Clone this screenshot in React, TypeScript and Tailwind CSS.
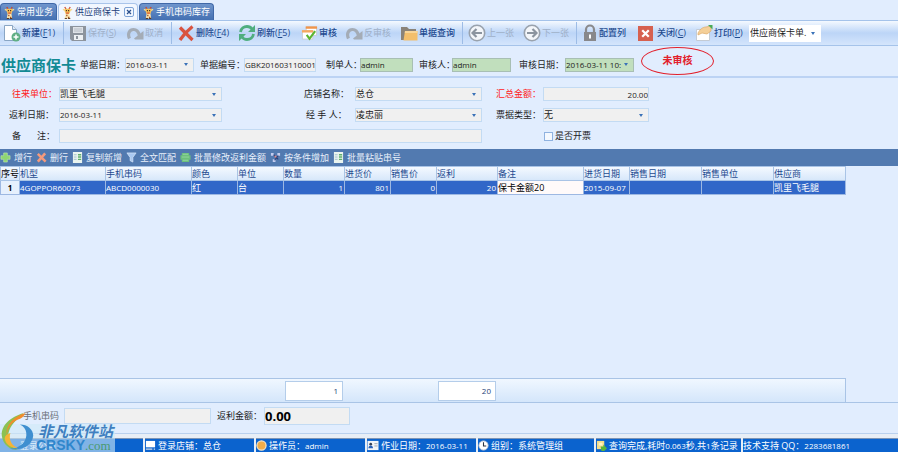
import { ReactNode } from "react";
import clsx from "clsx";

const Giraffe = () => (
  <svg viewBox="0 0 12 14" className="h-[13px] w-[11px] shrink-0">
    <path d="M3 1l1.500 2.500M9 1L7.500 3.500" stroke="#c9402b" strokeWidth="1.300" />
    <path d="M1 3.500l3 1.500M11 3.500L8 5" stroke="#f7d98c" strokeWidth="1.600" />
    <path d="M3 3h6v3l-1 2.500H4L3 6z" fill="#f6c25c" />
    <path d="M4 8h4l1 5.500H3z" fill="#fbe7b0" />
    <path d="M4.500 9.500h1.500v1.500H4.500zM6.500 11.500h1.500V13H6.500z" fill="#a8552a" />
    <path d="M4.500 6.800h3v1.700h-3z" fill="#e0683c" />
    <circle cx="4.800" cy="5" r="0.700" fill="#3b2412" />
    <circle cx="7.200" cy="5" r="0.700" fill="#3b2412" />
    <path d="M3 13.500h2.500M6.500 13.500H9" stroke="#4b2a12" />
  </svg>
);

const NewIcon = () => (
  <svg viewBox="0 0 18 18" className="h-[18px] w-[18px] shrink-0">
    <path d="M1.500 1.500h8l4 4v11h-12z" fill="#fff" stroke="#8aa6c4" />
    <path d="M9.500 1.500v4h4" fill="#dfe9f5" stroke="#8aa6c4" />
    <circle cx="13" cy="13" r="4.500" fill="#5fae84" />
    <path d="M13 10.500v5M10.500 13h5" stroke="#fff" strokeWidth="1.500" />
  </svg>
);

const SaveIcon = () => (
  <svg viewBox="0 0 18 18" className="h-[18px] w-[18px] shrink-0">
    <path d="M1 2h16v15H3l-2-2z" fill="#8d949d" />
    <path d="M4 3h10v6H4z" fill="#dfe3e8" />
    <path d="M5 5h8M5 7h8" stroke="#b6bcc4" />
    <path d="M5 11h9v5H5z" fill="#eef1f4" />
    <path d="M7 12h2v3H7z" fill="#8d949d" />
  </svg>
);

const UndoIcon = () => (
  <svg viewBox="0 0 18 18" className="h-[18px] w-[18px] shrink-0">
    <path d="M3.500 14.500C1 9 4 5.500 7.500 5.500c3 0 5 2 6 6" fill="none" stroke="#a4acb6" strokeWidth="3.200" />
    <path d="M8 14.500L17.500 7v8.500H9z" fill="#a4acb6" />
  </svg>
);

const DeleteIcon = () => (
  <svg viewBox="0 0 18 18" className="h-[18px] w-[18px] shrink-0">
    <path d="M3 3.500L15.500 16M15.500 2.500C11 6 7 10 3 16" fill="none" stroke="#d9533f" strokeWidth="3.200" />
  </svg>
);

const RefreshIcon = () => (
  <svg viewBox="0 0 18 18" className="h-[18px] w-[18px] shrink-0">
    <path d="M2.500 8C3 4.500 6 2.500 9 2.500c2.500 0 4 1 5 2.500M15.500 10c-.5 3.500-3.500 5.500-6.500 5.500-2.500 0-4-1-5-2.500" fill="none" stroke="#4fae7f" strokeWidth="2.800" />
    <path d="M17 1v7h-7zM1 17v-7h7z" fill="#4fae7f" />
  </svg>
);

const AuditIcon = () => (
  <svg viewBox="0 0 18 18" className="h-[18px] w-[17px] shrink-0">
    <path d="M5.500 2.500h11v9h-11z" fill="#fff" stroke="#c9cdd2" />
    <path d="M5 2h12v2.500H5z" fill="#f0954b" />
    <path d="M1.500 6.500h11v9h-11z" fill="#fff" stroke="#c9cdd2" />
    <path d="M1 6h12v2.500H1z" fill="#f6a85e" />
    <path d="M6 11l3 4 6-8" fill="none" stroke="#5cb531" strokeWidth="2.200" />
  </svg>
);

const FolderIcon = () => (
  <svg viewBox="0 0 18 18" className="h-[18px] w-[18px] shrink-0">
    <path d="M1 3h6l2 2h7v11H1z" fill="#8b8378" />
    <path d="M5 7h12.500v9.500H3.500z" fill="#f3bf6c" />
    <path d="M5 7h12.500v2H4.800z" fill="#f8d598" />
  </svg>
);

const ArrowIcon = ({ next }: { next?: boolean }) => (
  <svg viewBox="0 0 18 18" className={clsx("h-[18px] w-[18px] shrink-0", next && "rotate-180")}>
    <circle cx="9" cy="9" r="7.700" fill="#f3f6fa" stroke="#99a2ad" strokeWidth="1.600" />
    <path d="M14 9H5M8.500 5L4.500 9l4 4" fill="none" stroke="#8b949f" strokeWidth="2.200" />
  </svg>
);

const LockIcon = () => (
  <svg viewBox="0 0 16 18" className="h-[18px] w-4 shrink-0">
    <path d="M4 9V5.500a4 4 0 018 0V9" fill="none" stroke="#8a8a8c" strokeWidth="2.200" />
    <path d="M2 8h12v9H2z" fill="#88888b" />
    <path d="M7 10.500h2v4H7z" fill="#fff" />
  </svg>
);

const CloseIcon = () => (
  <svg viewBox="0 0 16 16" className="mr-[3px] h-[15px] w-[15px] shrink-0">
    <path d="M0 0h16v16H0z" fill="#d6604f" />
    <path d="M4.500 4.500l7 7M11.500 4.500l-7 7" stroke="#fff" strokeWidth="2.400" />
  </svg>
);

const PrintIcon = () => (
  <svg viewBox="0 0 18 18" className="h-[18px] w-[18px] shrink-0">
    <path d="M1.500 5.500h13v11h-13z" fill="#fff" stroke="#c4cbd4" />
    <path d="M3 9c2-4 5-6 8-6l5-1v5l-4 3-5-1-4 2z" fill="#f4cf98" stroke="#dca967" strokeWidth="0.700" />
    <path d="M13 1h4.500v4.500z" fill="#4aaa55" />
  </svg>
);

const PlusIcon = () => (
  <svg viewBox="0 0 12 12" className="h-[11px] w-[11px] shrink-0">
    <path d="M4 1h4v3h3v4H8v3H4V8H1V4h3z" fill="#8fd672" stroke="#c6efb4" strokeWidth="0.600" />
  </svg>
);

const CrossIcon = () => (
  <svg viewBox="0 0 12 12" className="h-[11px] w-[11px] shrink-0">
    <path d="M2 2l8.500 8.500M10 1.500L2 10.500" stroke="#f59a7c" strokeWidth="2.800" />
  </svg>
);

const SheetIcon = () => (
  <svg viewBox="0 0 12 12" className="h-[11px] w-[11px] shrink-0">
    <path d="M1 0h10v12H1z" fill="#eaf4ef" />
    <path d="M2 3h3M2 5.500h3M2 8h3" stroke="#9bbccd" />
    <path d="M6.500 3h3.500M6.500 5.500h3.500M6.500 8h3.500" stroke="#5fae6c" strokeWidth="1.500" />
  </svg>
);

const FunnelIcon = () => (
  <svg viewBox="0 0 12 12" className="h-[11px] w-[11px] shrink-0">
    <path d="M1 1h10L7.500 6v5l-3-1.500V6z" fill="#a9c8f0" stroke="#dfeafa" strokeWidth="0.700" />
  </svg>
);

const BatchIcon = () => (
  <svg viewBox="0 0 12 12" className="h-[11px] w-[11px] shrink-0">
    <path d="M2 1h8v2.500h1.500v5H10V11H2V8.500H.5v-5H2z" fill="#6cc07c" />
    <path d="M3 2.500h6M2 5.500h8M3 9h6" stroke="#9fdcaa" strokeWidth="0.800" />
  </svg>
);

const NodesIcon = () => (
  <svg viewBox="0 0 12 12" className="h-[11px] w-[11px] shrink-0">
    <path d="M1 1h3v3H1zM8 1h3v3H8zM3 8h3v3H3z" fill="#c3cdf0" />
    <path d="M4 3l5 5M9 4L5 9" stroke="#2c3f78" strokeWidth="1.200" />
    <path d="M5 4h2v2H5z" fill="#e58a8a" />
  </svg>
);

const MonitorIcon = () => (
  <svg viewBox="0 0 12 12" className="h-[11px] w-[11px] shrink-0">
    <path d="M1 1h10v7H1z" fill="#fff" />
    <path d="M1 10h7M9.500 10H11" stroke="#d4dce8" strokeWidth="1.500" />
  </svg>
);

const UserIcon = () => (
  <svg viewBox="0 0 12 12" className="h-[11px] w-[11px] shrink-0">
    <circle cx="6" cy="6" r="5" fill="#f0ad4b" stroke="#fbe6c3" strokeWidth="1.300" />
  </svg>
);

const CardIcon = () => (
  <svg viewBox="0 0 12 12" className="h-[11px] w-[12px] shrink-0">
    <path d="M0 1h12v10H0z" fill="#f3f5f8" />
    <circle cx="3.500" cy="4.500" r="1.500" fill="#333f55" />
    <path d="M1 9c0-4 5-4 5 0z" fill="#2a61b8" />
    <path d="M7.500 4H11M7.500 6.500H11" stroke="#9aa3b0" />
  </svg>
);

const ClockIcon = () => (
  <svg viewBox="0 0 12 12" className="h-[11px] w-[11px] shrink-0">
    <circle cx="6" cy="6" r="5" fill="#fff" stroke="#c9ced6" />
    <path d="M6 2.500V6.500h3" fill="none" stroke="#2b3340" strokeWidth="1.200" />
  </svg>
);

const DoneIcon = () => (
  <svg viewBox="0 0 12 12" className="h-[11px] w-[11px] shrink-0">
    <path d="M1 1h8v9H1z" fill="#f7df8a" />
    <path d="M3 3h4v3H3z" fill="#fff3c4" />
    <path d="M5 7h3V5l4 4-3 3H6z" fill="#5ab53c" />
  </svg>
);

type Tool = { icon: ReactNode; text: string; hotkey?: [string, string]; width: string; off?: boolean; line?: boolean };

const tools: Tool[] = [
  { icon: <NewIcon />, text: "新建", hotkey: ["F", "1"], width: "w-[60px]", line: true },
  { icon: <SaveIcon />, text: "保存", hotkey: ["S", ""], width: "w-[57px]", off: true },
  { icon: <UndoIcon />, text: "取消", width: "w-[45px]", off: true, line: true },
  { icon: <DeleteIcon />, text: "删除", hotkey: ["F", "4"], width: "w-[61px]" },
  { icon: <RefreshIcon />, text: "刷新", hotkey: ["F", "5"], width: "w-[63px]" },
  { icon: <AuditIcon />, text: "审核", width: "w-[44px]" },
  { icon: <UndoIcon />, text: "反审核", width: "w-[55px]", off: true },
  { icon: <FolderIcon />, text: "单据查询", width: "w-[62px]", line: true },
  { icon: <ArrowIcon />, text: "上一张", width: "w-[55px]", off: true },
  { icon: <ArrowIcon next />, text: "下一张", width: "w-[53px]", off: true, line: true },
  { icon: <LockIcon />, text: "配置列", width: "w-[56px]" },
  { icon: <CloseIcon />, text: "关闭", hotkey: ["C", ""], width: "w-[57px]" },
  { icon: <PrintIcon />, text: "打印", hotkey: ["P", ""], width: "w-[54px]" },
];

const actions = [
  { icon: <PlusIcon />, text: "增行" },
  { icon: <CrossIcon />, text: "删行" },
  { icon: <SheetIcon />, text: "复制新增" },
  { icon: <FunnelIcon />, text: "全文匹配" },
  { icon: <BatchIcon />, text: "批量修改返利金额" },
  { icon: <NodesIcon />, text: "按条件增加" },
  { icon: <SheetIcon />, text: "批量粘贴串号" },
];

const columns = [
  { name: "序号", width: "w-[19px]", value: "1" },
  { name: "机型", width: "w-[86px]", value: "4GOPPOR60073" },
  { name: "手机串码", width: "w-[86px]", value: "ABCD0000030" },
  { name: "颜色", width: "w-[46px]", value: "红" },
  { name: "单位", width: "w-[46px]", value: "台" },
  { name: "数量", width: "w-[61px]", value: "1", right: true },
  { name: "进货价", width: "w-[46px]", value: "801", right: true },
  { name: "销售价", width: "w-[46px]", value: "0", right: true },
  { name: "返利", width: "w-[61px]", value: "20", right: true },
  { name: "备注", width: "w-[86px]", value: "保卡金额20", editing: true },
  { name: "进货日期", width: "w-[46px]", value: "2015-09-07" },
  { name: "销售日期", width: "w-[72px]", value: "" },
  { name: "销售单位", width: "w-[72px]", value: "" },
  { name: "供应商", width: "w-[72px]", value: "凯里飞毛腿" },
];

const Tab = ({ text, active }: { text: string; active?: boolean }) => (
  <div
    className={clsx(
      "flex h-[17px] items-center gap-1 rounded-t-sm border border-b-0 px-[3px]",
      active ? "border-[#a9c4ea] bg-[#f2f7ff] text-[#1f3f7a]" : "border-[#3f68a8] bg-linear-to-b from-[#6f95cc] to-[#4470b2] text-white"
    )}
  >
    <button type="button" className="flex items-center gap-[2px]">
      <Giraffe />
      {text}
    </button>
    {active && (
      <button type="button" aria-label="关闭" className="flex h-[10px] w-[10px] items-center justify-center rounded-xs border border-[#7ea3d6]">
        <svg viewBox="0 0 6 6" className="h-[6px] w-[6px]">
          <path d="M1 1l4 4M5 1L1 5" stroke="#2a4f8c" strokeWidth="1.200" />
        </svg>
      </button>
    )}
  </div>
);

type PickProps = { id: string; value: string; label?: string; className?: string; small?: boolean };

const Pick = ({ id, value, label, className, small }: PickProps) => (
  <span className={clsx("relative flex items-center border", className || "h-[14px] border-[#c3dbf3] bg-[#f0f0f0]")}>
    <select id={id} aria-label={label} defaultValue={value} className={clsx("w-full appearance-none pr-3 outline-none", small && "text-[8px]")}>
      <option>{value}</option>
    </select>
    <svg viewBox="0 0 4 3" className="pointer-events-none absolute right-[5px] h-[3px] w-1">
      <path d="M0 0h4L2 3z" fill="#3a72b8" />
    </svg>
  </span>
);

const Status = ({ icon, className, children }: { icon?: ReactNode; className: string; children?: ReactNode }) => (
  <div className={clsx("flex h-[14px] items-center gap-[2px] border-t border-[#7d94b5] bg-[#0b63ce] whitespace-nowrap", className)}>
    {icon}
    <span>{children}</span>
  </div>
);

const Watermark = () => (
  <div className="absolute bottom-0 left-0 flex h-7 w-[115px] items-end bg-[#cfe9f6]/60">
    <svg viewBox="0 0 36 42" className="h-10 w-9 shrink-0">
      <path d="M24 1C10 5 0 14 1 25c1 9 8 15 17 15C9 36 6 30 8 22c2-8 8-14 16-21z" fill="#8cc152" />
      <path d="M26 1C14 4 5 13 6 25c1-8 5-14 12-17 3-1 6-3 8-7z" fill="#f08c2e" />
      <path d="M20 13c8 3 9 14 3 20-4 4-10 6-15 5 12 4 25-2 26-13 0-7-6-12-14-12z" fill="#3f8fd0" />
      <path d="M10 22c-2 7 1 13 8 16-7 0-13-4-14-10 0-3 2-5 6-6z" fill="#f5b335" />
    </svg>
    <div className="font-bold whitespace-nowrap">
      <div className="pl-[2px] text-[15px] leading-4 text-[#3f7fc0] italic">非凡软件站</div>
      <div className="font-['Liberation_Sans',sans-serif] text-[14px] leading-3 text-[#2f86cc]">
        CRSKY<span className="font-['Liberation_Serif',serif] text-[13px] font-normal text-[#4a9a70]">.com</span>
      </div>
    </div>
  </div>
);

export default function App() {
  return (
    <div className="min-h-screen bg-white pr-[2px] pb-[3px] font-['Open_Sans','Noto_Sans_CJK_SC',sans-serif] text-[9px] leading-3 text-[#1c1c1c]">
      <div className="relative flex min-h-[calc(100vh-3px)] flex-col bg-[#e1edfe]">
        <nav className="flex h-5 items-end gap-px">
          <Tab text="常用业务" />
          <Tab text="供应商保卡" active />
          <Tab text="手机串码库存" />
        </nav>

        <div className="flex h-[26px] items-center border-y border-[#a5c3ea] bg-linear-to-b from-[#f4f9ff] via-[#bcd5f7] to-[#d4e5fc] pl-[3px] whitespace-nowrap">
          {tools.map((t) => (
            <div key={t.text} className={clsx("flex items-center", t.line && "mr-[5px] border-r border-[#9dbce6]")}>
              <button type="button" disabled={t.off} className={clsx("flex h-[22px] items-center gap-px", t.width, t.off ? "text-[#9fb0c8]" : "font-medium text-[#1e4a8f]")}>
                {t.icon}
                <span>
                  {t.text}
                  {t.hotkey && (
                    <span>
                      (<u>{t.hotkey[0]}</u>
                      {t.hotkey[1]})
                    </span>
                  )}
                </span>
              </button>
            </div>
          ))}
          <Pick id="template" label="打印模板" value="供应商保卡单." className="h-[17px] w-[72px] border-white bg-white" />
        </div>

        <div className="flex h-8 items-center border-b-2 border-[#bcd3f4] whitespace-nowrap">
          <div className="flex items-center pt-[7px]">
            <h1 className="w-20 pl-px text-[15px] leading-5 font-bold text-[#128a94]">供应商保卡</h1>
            <label htmlFor="billDate" className="w-[45px]">单据日期：</label>
            <Pick id="billDate" value="2016-03-11" small className="h-[14px] w-[69px] border-[#c3dbf3] bg-[#f0f0f0]" />
            <label htmlFor="billNo" className="ml-[6px] w-11">单据编号：</label>
            <input id="billNo" readOnly defaultValue="GBK201603110001" className="h-[14px] w-[72px] border border-[#c3dbf3] bg-[#f0f0f0] text-[8px]" />
            <label htmlFor="maker" className="ml-[10px] w-[34px]">制单人：</label>
            <input id="maker" readOnly defaultValue="admin" className="h-[14px] w-[53px] border border-[#a8bfb4] bg-[#c1dfbd] text-[8px]" />
            <label htmlFor="auditor" className="ml-[6px] w-[33px]">审核人：</label>
            <input id="auditor" readOnly defaultValue="admin" className="h-[14px] w-[59px] border border-[#a8bfb4] bg-[#c1dfbd] text-[8px]" />
            <label htmlFor="auditDate" className="ml-2 w-[46px]">审核日期：</label>
            <Pick id="auditDate" value="2016-03-11 10:" small className="h-[14px] w-[69px] border-[#a8bfb4] bg-[#c1dfbd]" />
          </div>
          <strong className="ml-[7px] flex h-7 w-[73px] items-center justify-center rounded-[50%] border border-[#e2202c] font-['Liberation_Serif','Noto_Sans_CJK_SC',serif] text-[10px] text-[#e2202c]">
            未审核
          </strong>
        </div>

        <form className="grid grid-cols-[59px_163px_133px_127px_61px_106px] items-center gap-y-[7px] pt-[9px] pb-[6px] whitespace-nowrap">
          <label htmlFor="partner" className="pl-3 text-[#ff1a1a]">往来单位：</label>
          <Pick id="partner" value="凯里飞毛腿" />
          <label htmlFor="shop" className="pl-[82px]">店铺名称：</label>
          <Pick id="shop" value="总仓" />
          <label htmlFor="total" className="pl-[14px] text-[#ff1a1a]">汇总金额：</label>
          <input id="total" readOnly defaultValue="20.00" className="h-[14px] w-full border border-[#c3dbf3] bg-[#f0f0f0] text-right text-[8px]" />
          <label htmlFor="rebateDate" className="pl-[9px]">返利日期：</label>
          <Pick id="rebateDate" value="2016-03-11" small />
          <label htmlFor="handler" className="pl-[84px]">经 手 人：</label>
          <Pick id="handler" value="凌忠丽" />
          <label htmlFor="invoiceType" className="pl-[14px]">票据类型：</label>
          <Pick id="invoiceType" value="无" />
          <label htmlFor="remark" className="flex w-[55px] justify-between pl-3">
            <span>备</span>
            <span>注：</span>
          </label>
          <input id="remark" className="col-span-3 h-[14px] border border-[#c3dbf3] bg-[#f0f0f0]" />
          <label className="col-span-2 flex items-center gap-[2px] pl-[62px]">
            <input type="checkbox" className="h-[9px] w-[9px] appearance-none border border-[#8fb2e0] bg-[#f4f8fe]" />
            是否开票
          </label>
        </form>

        <div className="flex h-[17px] items-center gap-1 bg-[#527ab0] whitespace-nowrap text-[#e8f0fb]">
          {actions.map((a) => (
            <button key={a.text} type="button" className="flex items-center gap-[3px]">
              {a.icon}
              {a.text}
            </button>
          ))}
        </div>

        <div className="flex-1">
          <table className="w-[845px] table-fixed border-collapse whitespace-nowrap">
            <thead>
              <tr className="h-[14px] bg-linear-to-b from-[#f4f9ff] to-[#d5e6fa] text-[#1e4a8f]">
                {columns.map((c, i) => (
                  <th key={c.name} className={clsx("border border-[#a9c4e6] p-0 text-left font-normal", c.width, i === 0 && "text-black")}>
                    {c.name}
                  </th>
                ))}
              </tr>
            </thead>
            <tbody>
              <tr className="h-[14px] bg-[#3167c8] text-[8px] text-white">
                {columns.map((c, i) => (
                  <td
                    key={c.name}
                    className={clsx(
                      "border border-[#9db8e2] p-0",
                      i === 0 && "bg-[#e6f0fd] text-center font-bold text-black",
                      c.right && "pr-px text-right",
                      c.editing && "bg-[#fffafa] text-black",
                      /[\u4e00-\u9fa5]/.test(c.value) && "text-[9px]"
                    )}
                  >
                    {c.value}
                  </td>
                ))}
              </tr>
            </tbody>
          </table>
        </div>

        <div className="border-b border-[#a9c4e6]">
          <div className="flex h-6 w-[846px] items-center border-t border-r border-[#a9c4e6] bg-linear-to-b from-[#f0f7ff] to-[#d4e6fb] pl-[285px] text-[8px] text-[#1e3f7a]">
            <output className="flex h-5 w-[58px] items-center justify-end border border-[#b4cdea] bg-white pr-1">1</output>
            <output className="ml-[95px] flex h-5 w-[58px] items-center justify-end border border-[#b4cdea] bg-white pr-1">20</output>
          </div>
        </div>

        <div className="flex h-[31px] items-center border-b border-[#b9d0ee] pb-1 pl-[23px] whitespace-nowrap">
          <label htmlFor="serial" className="w-[41px] text-[#6b7078]">手机串码</label>
          <input id="serial" className="h-4 w-[147px] border border-[#c3dbf3] bg-[#f0f0f0]" />
          <label htmlFor="rebate" className="ml-[6px] w-[47px]">返利金额：</label>
          <input id="rebate" readOnly defaultValue="0.00" className="h-[18px] w-[86px] border border-[#c3dbf3] bg-[#f0f0f0] text-[13px] font-bold text-black" />
        </div>

        <footer className="flex gap-[2px] bg-[#e8eef6] pt-1 text-white">
          <Status className="w-[143px] pl-5">登录公司：</Status>
          <Status className="w-[109px]" icon={<MonitorIcon />}>登录店铺：总仓</Status>
          <Status className="w-[109px]" icon={<UserIcon />}>
            操作员：<span className="text-[8px]">admin</span>
          </Status>
          <Status className="w-[109px]" icon={<CardIcon />}>
            作业日期：<span className="text-[8px]">2016-03-11</span>
          </Status>
          <Status className="w-[116px]" icon={<ClockIcon />}>组别：系统管理组</Status>
          <Status className="w-[145px]" icon={<DoneIcon />}>
            查询完成,耗时<span className="text-[8px]">0.063</span>秒,共<span className="text-[8px]">1</span>条记录
          </Status>
          <Status className="flex-1">
            技术支持 QQ：<span className="text-[8px]">2283681861</span>
          </Status>
        </footer>
        <Watermark />
      </div>
    </div>
  );
}
